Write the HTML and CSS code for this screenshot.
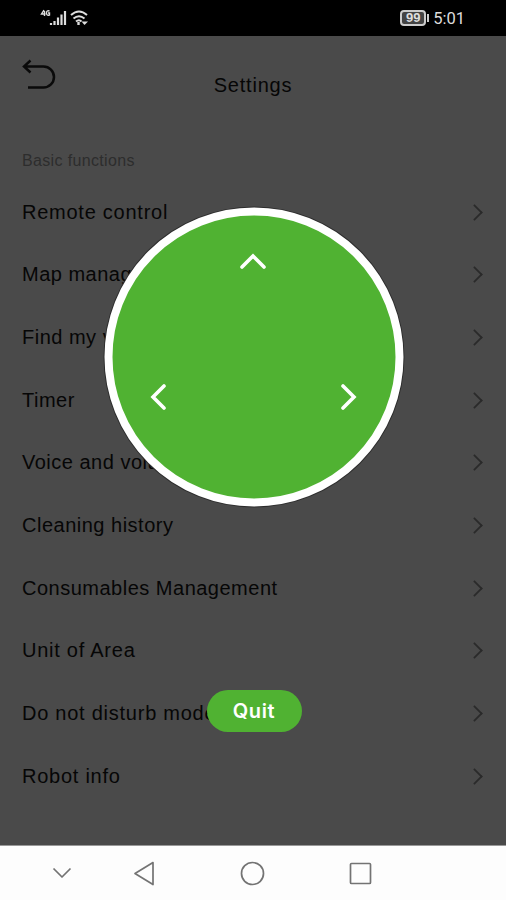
FILE: index.html
```html
<!DOCTYPE html>
<html lang="en">
  <head>
    <meta charset="UTF-8">
    <meta name="viewport" content="width=device-width, initial-scale=1.0">
    <title>Settings</title>
    <link rel="stylesheet" href="styles.css">
  </head>
  <body>
    <div class="phone">
      <header class="status-bar">
        <svg class="signal" width="50" height="20" viewBox="0 0 50 20">
          <path d="M4 2L1.500 6H5.500M4.500 3V8M9.500 3Q6.500 2 6.500 5Q6.500 8 9.500 7V5H8" fill="none" stroke="#ddd" stroke-width="1.4"/>
          <path d="M11 17V15M14.500 17V13M18 17V9.500M21.500 17V6.500M25 17V3" stroke="#ddd" stroke-width="2.200"/>
          <path d="M31 7Q39 0 47 7M33.500 10.500Q39 6 44.500 10.500M36 13.500Q39 11 41.500 13.500" fill="none" stroke="#ddd" stroke-width="2"/>
          <path d="M38.500 14V17" stroke="#ddd" stroke-width="2.400"/>
          <path d="M41.500 13.500H48L44.500 17Z" fill="#ddd"/>
        </svg>
        <div class="status-right">
          <span class="battery">99</span>
          <span class="clock">5:01</span>
        </div>
      </header>

      <main class="settings">
        <div class="title-bar">
          <svg class="back" width="36" height="34" viewBox="0 0 36 34">
            <path d="M9.500 2.500L3 8.500L9.500 14.500M3 8.500H22.500A10.300 10.300 0 0 1 22.500 29.500H7" fill="none" stroke="#0a0a0a" stroke-width="2.500"/>
          </svg>
          <h1>Settings</h1>
        </div>
        <h2>Basic functions</h2>
        <ul class="menu">
          <li class="wide">Remote control</li>
          <li>Map management</li>
          <li>Find my vacuum</li>
          <li>Timer</li>
          <li>Voice and volume</li>
          <li>Cleaning history</li>
          <li>Consumables Management</li>
          <li class="wide">Unit of Area</li>
          <li class="wide">Do not disturb mode</li>
          <li class="wide">Robot info</li>
        </ul>

        <!-- Remote control dialog -->
        <div class="overlay">
          <svg class="remote" width="302" height="302" viewBox="0 0 302 302">
            <circle cx="151" cy="151" r="150.500" fill="#2d2d2d"/>
            <circle cx="151" cy="151" r="145.500" fill="#50b232" stroke="#fff" stroke-width="8"/>
            <path d="M139 61L150 50L161 61M61 180L50 191L61 202M240 180L251 191L240 202" fill="none" stroke="#fff" stroke-width="3.600" stroke-linecap="round"/>
          </svg>
          <button class="quit" type="button">Quit</button>
        </div>
      </main>

      <nav class="nav-bar">
        <svg width="506" height="54" viewBox="0 0 506 54">
          <g fill="none" stroke="#737373" stroke-width="1.700" stroke-linejoin="round">
            <path d="M53.500 22.500L62 31L70.500 22.500"/>
            <path d="M153 16.500L135 27.500L153 38.500Z"/>
            <circle cx="252.500" cy="27.500" r="11"/>
            <rect x="350.500" y="17.500" width="20" height="20" rx="1"/>
          </g>
        </svg>
      </nav>
    </div>
  </body>
</html>
```
FILE: styles.css
```css
* {
  margin: 0;
  padding: 0;
  box-sizing: border-box;
}

body {
  font-family: "Liberation Sans", Arial, sans-serif;
  background-color: #fdfdfd;
}

.phone {
  display: flex;
  flex-direction: column;
  width: 506px;
  height: 900px;
  overflow: hidden;
}

.status-bar {
  display: flex;
  justify-content: space-between;
  align-items: center;
  height: 36px;
  padding: 0 41px 0 40px;
  background-color: #000;
  color: #ddd;
}

.status-right {
  display: flex;
  align-items: center;
  gap: 7px;
}

.battery {
  position: relative;
  width: 26px;
  height: 16px;
  border: 2px solid #ccc;
  border-radius: 4px;
  background-color: #444;
  font-size: 13px;
  font-weight: bold;
  line-height: 12px;
  text-align: center;
}

.battery::after {
  content: "";
  position: absolute;
  top: 2px;
  right: -5px;
  width: 2px;
  height: 8px;
  background-color: #ccc;
}

.clock {
  padding-top: 2px;
  font-family: Roboto, sans-serif;
  font-size: 16.5px;
  line-height: 20px;
}

.settings {
  position: relative;
  height: 809px;
  background-color: #4a4a4a;
  color: #060606;
}

.title-bar {
  display: grid;
  grid-template-columns: 60px 1fr 60px;
  height: 97px;
  padding: 22px 21px 0;
}

.title-bar h1 {
  padding-top: 15px;
  font-size: 20px;
  font-weight: normal;
  line-height: 24px;
  letter-spacing: 0.8px;
  text-align: center;
}

.settings h2 {
  height: 48px;
  padding: 18px 22px 0;
  color: #2d2d2d;
  font-size: 16px;
  font-weight: normal;
  line-height: 20px;
  letter-spacing: 0.35px;
}

.menu {
  list-style: none;
}

.menu li {
  display: flex;
  justify-content: space-between;
  align-items: center;
  height: 62.65px;
  padding: 0 25px 0 22px;
  font-size: 20px;
  letter-spacing: 0.5px;
}

.menu li.wide {
  letter-spacing: 0.75px;
}

.menu li::after {
  content: "";
  width: 11px;
  height: 11px;
  border: solid #2a2a2a;
  border-width: 2px 2px 0 0;
  transform: rotate(45deg) scale(0.9);
}

.overlay {
  position: absolute;
  inset: 0;
  display: flex;
  flex-direction: column;
  align-items: center;
  gap: 182px;
  padding: 170px 0 0 2px;
}

.remote {
  flex: none;
}

.quit {
  width: 95px;
  height: 42px;
  border: none;
  border-radius: 21px;
  background-color: #50b232;
  color: #fff;
  font-family: Inter, sans-serif;
  font-size: 20px;
  font-weight: 600;
  line-height: 40px;
  letter-spacing: 0.6px;
}

.nav-bar {
  height: 55px;
  border-top: 1px solid #999;
  background-color: #fdfdfd;
}
```
